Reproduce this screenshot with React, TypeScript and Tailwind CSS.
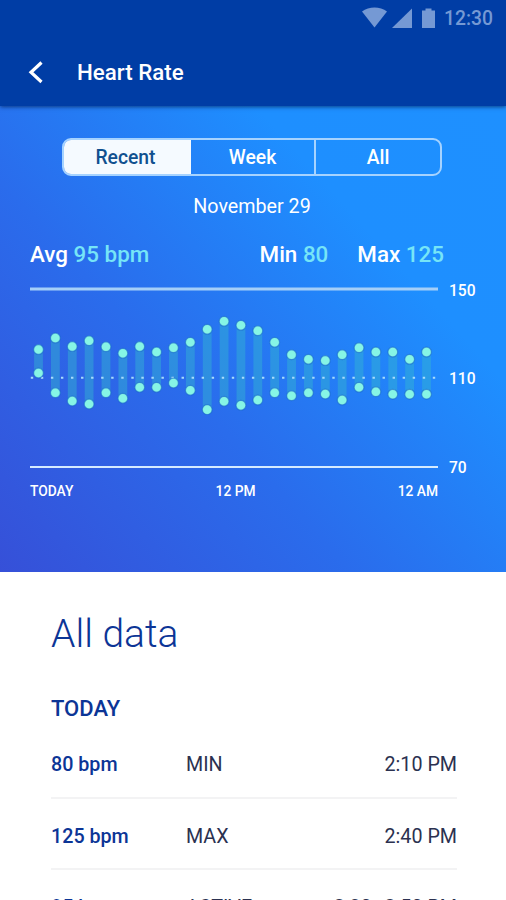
// [top, bottom] of each reading range, in chart pixels
const ranges: [number, number][] = [
  [62.5, 86], [51, 105.7], [59.5, 114], [53.7, 117], [59.7, 105.7], [66.3, 111.3],
  [59.5, 100.3], [65, 100.3], [60.7, 96], [55.3, 103.3], [42.3, 122.6], [34.3, 114.3],
  [38.3, 118.3], [43.7, 113], [55.3, 105.7], [67.7, 108.7], [72.3, 105.7], [73.5, 107],
  [67.7, 113], [60.7, 100.3], [65, 104.7], [65, 107.2], [72.3, 107.2], [65, 107.2],
];

const entries = [
  { bpm: "80 bpm", label: "MIN", time: "2:10 PM" },
  { bpm: "125 bpm", label: "MAX", time: "2:40 PM" },
  { bpm: "95 bpm", label: "ACTIVE", time: "2:30–2:50 PM" },
];

function StatusBar() {
  return (
    <div className="flex h-9 items-center justify-end pr-[13px] text-[#7599d4]">
      <svg width="76" height="22" viewBox="0 0 76 22" fill="currentColor">
        <path d="M0 4.5C7-.8 18-.8 25 4.5L12.5 20.5Z" />
        <path d="M30 21 50 1.5V21Z" />
        <path d="M60 3.5h3.5v-2h6v2H73V21H60Z" />
      </svg>
      <span className="ml-[6px] pt-[2px] text-[19.3px] font-medium">12:30</span>
    </div>
  );
}

function RangeChart() {
  return (
    <svg width="408" height="184" viewBox="0 0 408 184" className="block">
      <rect y="0.5" width="408" height="3" fill="#a5cff8" />
      <rect y="179" width="408" height="2" fill="#d5ebff" />
      {ranges.map(([top, bottom], i) => (
        <rect key={i} x={4.1 + i * 16.87} y={top} width="8.8" height={bottom - top} fill="#35b8d0" fillOpacity="0.44" />
      ))}
      <line x1="0.8" x2="407" y1="90.7" y2="90.7" stroke="#a8dcfb" strokeWidth="2" strokeDasharray="2.4 7.65" />
      {ranges.map(([top, bottom], i) => (
        <g key={i} fill="#86f5e5" stroke="#1766c9" strokeOpacity="0.6" strokeWidth="1.2">
          <circle cx={8.5 + i * 16.87} cy={top} r="4.9" />
          <circle cx={8.5 + i * 16.87} cy={bottom} r="4.9" />
        </g>
      ))}
    </svg>
  );
}

export default function App() {
  return (
    <div className="flex h-[900px] w-[506px] flex-col overflow-hidden bg-white font-['Roboto',sans-serif]">
      <header className="relative h-[106px] shrink-0 bg-[#003da5] shadow-[0_1px_4px_rgba(0,30,80,0.7)]">
        <StatusBar />
        <div className="flex h-[72px] items-center pl-7 text-white">
          <svg width="16" height="24" viewBox="0 0 16 24" fill="none" stroke="currentColor" strokeWidth="3.2">
            <path d="M13.5 2.5 3 12.3 13.5 22" />
          </svg>
          <h1 className="ml-[33px] pt-px text-[22.3px] font-medium">Heart Rate</h1>
        </div>
      </header>

      <section className="flex h-[466px] shrink-0 flex-col bg-[linear-gradient(48deg,#3650d8_0%,#2a6cec_38%,#1e8fff_73%,#1e90ff_100%)] text-white">
        {/* Period tabs */}
        <div className="mt-8 ml-[62px] grid h-[38px] w-[380px] grid-cols-[127px_125px_1fr] overflow-hidden rounded-[9px] border-2 border-[#a6d3ff] text-center text-[19.3px] leading-[36px] font-medium">
          <div className="bg-[#f5faff] pr-[4px] text-[#10508f]">Recent</div>
          <div className="border-r-2 border-[#a6d3ff]">Week</div>
          <div>All</div>
        </div>

        <p className="mt-[17px] pr-[2px] text-center text-[19.7px] leading-7">November 29</p>

        {/* Summary */}
        <div className="mt-[18px] flex pr-[62px] pl-[30px] text-[22.4px] leading-[30px] font-medium">
          <div>Avg <span className="text-[#76e5f7]">95 bpm</span></div>
          <div className="ml-auto">Min <span className="text-[#76e5f7]">80</span></div>
          <div className="ml-[29px]">Max <span className="text-[#76e5f7]">125</span></div>
        </div>

        <div className="mt-[18px] ml-[30px] flex">
          <RangeChart />
          <div className="-mt-[6px] ml-[11px] flex h-[197px] flex-col justify-between text-[15.6px] leading-5 font-medium">
            <span>150</span>
            <span className="-mt-[2px]">110</span>
            <span>70</span>
          </div>
        </div>
        <div className="mt-[3px] flex w-[438px] justify-between pl-[30px] text-[13.8px] leading-5 font-medium">
          <span>TODAY</span>
          <span>12 PM</span>
          <span>12 AM</span>
        </div>
      </section>

      <main className="flex flex-col pr-[49px] pl-[51px]">
        <h2 className="mt-9 text-[39px] leading-[52px] font-light text-[#0c3596]">All data</h2>
        <h3 className="mt-[35px] text-[22px] leading-7 font-medium text-[#0c3596]">TODAY</h3>
        <div className="mt-1">
          {entries.map((entry) => (
            <div key={entry.bpm} className="flex h-[71.5px] items-center border-b-2 border-[#f3f3f4] pt-[7px] text-[19.7px] text-[#2b3150]">
              <span className="w-[135px] font-medium text-[#0c3596]">{entry.bpm}</span>
              <span>{entry.label}</span>
              <span className="ml-auto">{entry.time}</span>
            </div>
          ))}
        </div>
      </main>
    </div>
  );
}
